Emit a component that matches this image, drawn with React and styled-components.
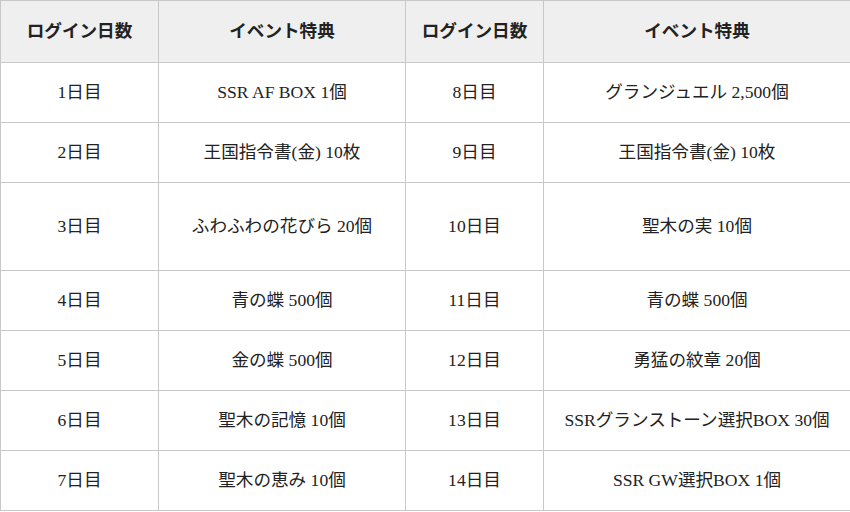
import styled, { createGlobalStyle } from "styled-components"

const GlobalStyle = createGlobalStyle`
  html, body {
    margin: 0;
    padding: 0;
    background: #fff;
  }
  body {
    font-family: "Liberation Serif", "Noto Sans CJK JP", serif;
    color: #222;
  }
`

const Table = styled.table`
  width: 850px;
  border-collapse: collapse;
  table-layout: fixed;
  font-size: 17.6px;
  line-height: 1.5;
`

const HeadCell = styled.th`
  background: #efefef;
  border: 1px solid #c8c8c8;
  font-weight: 700;
  text-align: center;
  vertical-align: middle;
  padding: 0 8px 1px;
`

const Row = styled.tr`
  height: ${p => (p.$tall ? "88px" : "60px")};
`

const HeadRow = styled.tr`
  height: 62px;
`

const Cell = styled.td`
  border: 1px solid #c8c8c8;
  text-align: center;
  vertical-align: middle;
  padding: 0 8px 0;
  white-space: nowrap;
`

const rows = [
  ["1日目", "SSR AF BOX 1個", "8日目", "グランジュエル 2,500個"],
  ["2日目", "王国指令書(金) 10枚", "9日目", "王国指令書(金) 10枚"],
  ["3日目", "ふわふわの花びら 20個", "10日目", "聖木の実 10個", true],
  ["4日目", "青の蝶 500個", "11日目", "青の蝶 500個"],
  ["5日目", "金の蝶 500個", "12日目", "勇猛の紋章 20個"],
  ["6日目", "聖木の記憶 10個", "13日目", "SSRグランストーン選択BOX 30個"],
  ["7日目", "聖木の恵み 10個", "14日目", "SSR GW選択BOX 1個"],
]

export default function App() {
  return (
    <>
      <GlobalStyle />
      <Table>
        <colgroup>
          <col style={{ width: 158 }} />
          <col style={{ width: 247 }} />
          <col style={{ width: 138 }} />
          <col style={{ width: 307 }} />
        </colgroup>
        <thead>
          <HeadRow>
            <HeadCell>ログイン日数</HeadCell>
            <HeadCell>イベント特典</HeadCell>
            <HeadCell>ログイン日数</HeadCell>
            <HeadCell>イベント特典</HeadCell>
          </HeadRow>
        </thead>
        <tbody>
          {rows.map(([d1, r1, d2, r2, tall]) => (
            <Row key={d1} $tall={tall}>
              <Cell>{d1}</Cell>
              <Cell>{r1}</Cell>
              <Cell>{d2}</Cell>
              <Cell>{r2}</Cell>
            </Row>
          ))}
        </tbody>
      </Table>
    </>
  )
}
